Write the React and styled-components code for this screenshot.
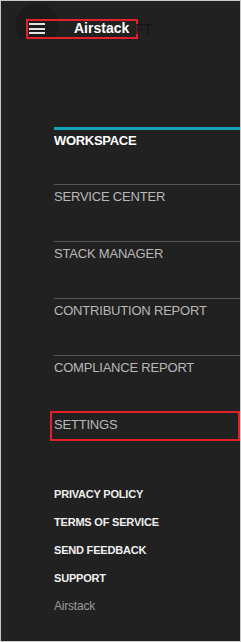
import React from "react";
import styled, { createGlobalStyle } from "styled-components";

const GlobalStyle = createGlobalStyle`
  html, body {
    margin: 0;
    padding: 0;
    background: #ffffff;
  }
  * {
    box-sizing: border-box;
  }
`;

const Frame = styled.div`
  width: 241px;
  height: 642px;
  border: 1px solid #c9c9c9;
  background: #212121;
  font-family: "Liberation Sans", Arial, sans-serif;
  overflow: hidden;
`;

// header with hamburger and brand
const TopBar = styled.div`
  display: flex;
  align-items: center;
  padding: 17px 0 0 25px;
  height: 38px;
  background: radial-gradient(circle at 36px 24px, #1b1b1b 21px, transparent 22px);
`;

const BrandBox = styled.div`
  display: flex;
  align-items: center;
  width: 112px;
  height: 20px;
  padding-left: 1px;
  border: 2px solid #e4202b;
`;

const Burger = styled.div`
  display: flex;
  flex-direction: column;
  justify-content: space-between;
  width: 16px;
  height: 11px;
  margin-right: 29px;
`;

const BurgerLine = styled.span`
  display: block;
  height: 2px;
  background: #e2e2e2;
`;

const Brand = styled.span`
  color: #ffffff;
  font-size: 14px;
  font-weight: 700;
  line-height: 16px;
  margin-top: -2px;
`;

const Ghost = styled.span`
  color: #141414;
  font-size: 14px;
  line-height: 16px;
  margin-left: -3px;
`;

const Nav = styled.nav`
  display: flex;
  flex-direction: column;
  padding-left: 53px;
  margin-top: 88px;
`;

const NavItem = styled.div`
  position: relative;
  height: 57px;
  padding-top: ${({ active }) => (active ? "3px" : "4px")};
  border-top: ${({ active }) => (active ? "3px solid #17a2b8" : "1px solid #555555")};
  color: ${({ active }) => (active ? "#ffffff" : "#b8b8b8")};
  font-size: 13px;
  font-weight: ${({ active }) => (active ? 700 : 400)};
  letter-spacing: ${({ active }) => (active ? "-0.3px" : "-0.2px")};
  line-height: 16px;

  ${({ marked }) =>
    marked &&
    `
    &::after {
      content: "";
      position: absolute;
      left: -4px;
      right: 0;
      top: -2px;
      height: 26px;
      border: 2px solid #e4202b;
    }
  `}
`;

const Footer = styled.div`
  display: flex;
  flex-direction: column;
  padding-left: 53px;
  margin-top: 11px;
`;

const FooterLink = styled.div`
  height: 28px;
  line-height: 28px;
  font-size: ${({ muted }) => (muted ? "12px" : "11px")};
  font-weight: ${({ muted }) => (muted ? 400 : 700)};
  color: ${({ muted }) => (muted ? "#9a9a9a" : "#f0f0f0")};
  letter-spacing: -0.2px;
`;

const navItems = [
  "WORKSPACE",
  "SERVICE CENTER",
  "STACK MANAGER",
  "CONTRIBUTION REPORT",
  "COMPLIANCE REPORT",
  "SETTINGS",
];

const footerLinks = ["PRIVACY POLICY", "TERMS OF SERVICE", "SEND FEEDBACK", "SUPPORT"];

const App = () => {
  return (
    <>
      <GlobalStyle />
      <Frame>
        <TopBar>
          <BrandBox>
            <Burger>
              <BurgerLine />
              <BurgerLine />
              <BurgerLine />
            </Burger>
            <Brand>Airstack</Brand>
          </BrandBox>
          <Ghost>FT</Ghost>
        </TopBar>
        <Nav>
          {navItems.map((item, i) => (
            <NavItem key={item} active={i === 0} marked={item === "SETTINGS"}>
              {item}
            </NavItem>
          ))}
        </Nav>
        <Footer>
          {footerLinks.map((link) => (
            <FooterLink key={link}>{link}</FooterLink>
          ))}
          <FooterLink muted>Airstack</FooterLink>
        </Footer>
      </Frame>
    </>
  );
};

export default App;
